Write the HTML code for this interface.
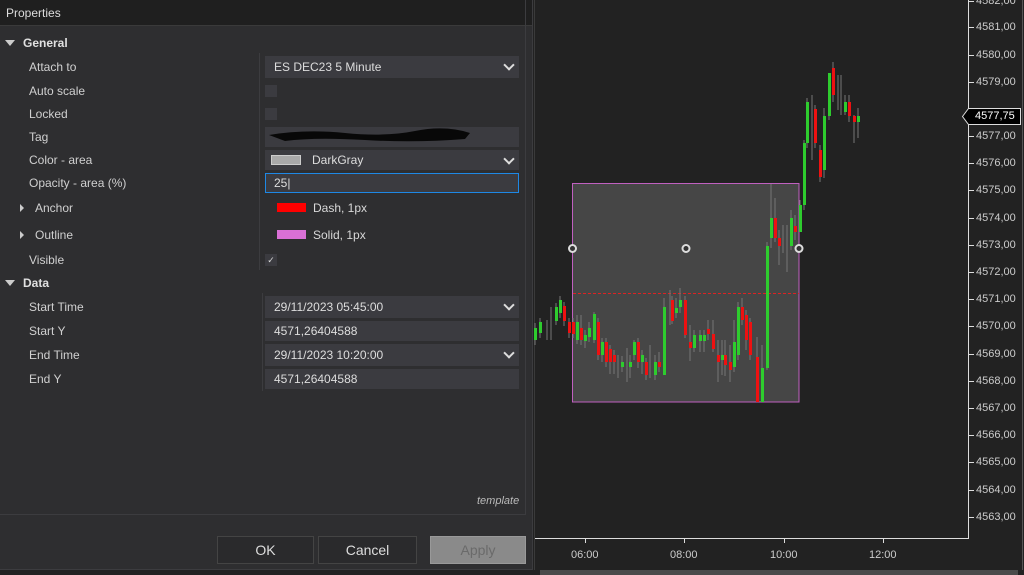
<!DOCTYPE html>
<html><head><meta charset="utf-8"><style>
*{margin:0;padding:0;box-sizing:border-box}
body{width:1024px;height:575px;overflow:hidden;background:#222;font-family:"Liberation Sans",sans-serif;font-size:12px;color:#d8d8d8;position:relative}
.a{position:absolute}
#dlg{left:0;top:0;width:533px;height:570px;background:#2e2e30;border-right:1px solid #3c3c3f}
#title{left:0;top:0;width:532px;height:26px;background:#1f1f1f;border-bottom:1px solid #3a3a3a;padding:6px 6px;color:#ddd}
.lbl{left:29px;color:#d0d0d0}
.hdr{left:23px;font-weight:bold;color:#e0e0e0}
.tri{width:0;height:0;border-left:5px solid transparent;border-right:5px solid transparent;border-top:6px solid #ccc}
.tr{width:0;height:0;border-top:4px solid transparent;border-bottom:4px solid transparent;border-left:4px solid #ccc}
.box{left:265px;width:254px;background:#3b3b40;padding-left:9px;color:#ddd}
.chev{right:6px;top:5px;width:8px;height:8px;border-right:2px solid #ddd;border-bottom:2px solid #ddd;transform:rotate(45deg)}
.cb{left:265px;width:12px;height:12px;background:#3b3b40}
.btn{top:536px;height:28px;border:1px solid #444;background:#2a2a2c;text-align:center;line-height:26px;font-size:14px;color:#ddd}
.pl{left:976px;color:#ccc;font-size:11px}
.tl{top:549px;color:#ccc;font-size:11px}
</style></head><body>
<div id="dlg" class="a">
<div id="title" class="a">Properties</div>
<div class="a tri" style="left:5px;top:40px"></div>
<div class="a hdr" style="top:36px">General</div>
<div class="a" style="left:259px;top:53px;width:1px;height:217px;background:#3c3c3f"></div>
<div class="a lbl" style="top:60px">Attach to</div>
<div class="a box" style="top:56px;height:22px;line-height:22px">ES DEC23 5 Minute<div class="a chev"></div></div>
<div class="a lbl" style="top:84px">Auto scale</div><div class="a cb" style="top:85px"></div>
<div class="a lbl" style="top:107px">Locked</div><div class="a cb" style="top:108px"></div>
<div class="a lbl" style="top:130px">Tag</div>
<div class="a box" style="top:127px;height:20px"><svg class="a" style="left:0;top:0" width="210" height="20"><path d="M4 8 Q40 2 80 6 T150 4 T205 6 L200 12 Q150 16 100 13 T20 14 Z" fill="#080808"/></svg></div>
<div class="a lbl" style="top:153px">Color - area</div>
<div class="a box" style="top:150px;height:20px;line-height:20px;padding-left:47px">DarkGray<div class="a" style="left:6px;top:5px;width:30px;height:10px;background:#a9a9a9;border:1px solid #ccc"></div><div class="a chev"></div></div>
<div class="a lbl" style="top:176px">Opacity - area (%)</div>
<div class="a box" style="top:173px;height:20px;line-height:18px;border:1px solid #1e88e5;padding-left:8px">25|</div>
<div class="a tr" style="left:20px;top:204px"></div>
<div class="a lbl" style="left:35px;top:201px">Anchor</div>
<div class="a" style="left:277px;top:203px;width:29px;height:9px;background:#f00"></div>
<div class="a" style="left:313px;top:201px">Dash, 1px</div>
<div class="a tr" style="left:20px;top:231px"></div>
<div class="a lbl" style="left:35px;top:228px">Outline</div>
<div class="a" style="left:277px;top:230px;width:29px;height:9px;background:#da70d6"></div>
<div class="a" style="left:313px;top:228px">Solid, 1px</div>
<div class="a lbl" style="top:253px">Visible</div><div class="a cb" style="top:254px;font-size:9px;line-height:12px;text-align:center">✓</div>
<div class="a tri" style="left:5px;top:280px"></div>
<div class="a hdr" style="top:276px">Data</div>
<div class="a" style="left:262px;top:293px;width:1px;height:98px;background:#3c3c3f"></div>
<div class="a lbl" style="top:300px">Start Time</div>
<div class="a box" style="top:296px;height:22px;line-height:22px">29/11/2023 05:45:00<div class="a chev"></div></div>
<div class="a lbl" style="top:324px">Start Y</div>
<div class="a box" style="top:321px;height:20px;line-height:20px">4571,26404588</div>
<div class="a lbl" style="top:348px">End Time</div>
<div class="a box" style="top:344px;height:22px;line-height:22px">29/11/2023 10:20:00<div class="a chev"></div></div>
<div class="a lbl" style="top:372px">End Y</div>
<div class="a box" style="top:369px;height:20px;line-height:20px">4571,26404588</div>
<div class="a" style="left:0;top:0;width:526px;height:515px;border-right:1px solid #3c3c3f;border-bottom:1px solid #3c3c3f"></div>
<div class="a" style="left:477px;top:495px;font-style:italic;font-size:11px;color:#bbb">template</div>
<div class="a btn" style="left:217px;width:97px">OK</div>
<div class="a btn" style="left:318px;width:99px">Cancel</div>
<div class="a btn" style="left:430px;width:96px;background:#8a8a8a;color:#6a6a6a;border-color:#999">Apply</div>
<div class="a" style="left:0;top:569px;width:533px;height:1px;background:#3c3c3f"></div>
</div>
<div class="a" style="left:534px;top:0;width:1px;height:570px;background:#3a3a3a"></div>
<div class="a" style="left:540px;top:570px;width:478px;height:5px;background:#4a4a4a"></div>
<svg class="a" style="left:0;top:0" width="1024" height="575">
<line x1="968.5" y1="0" x2="968.5" y2="538" stroke="#ddd"/>
<line x1="535" y1="538.5" x2="969" y2="538.5" stroke="#ddd"/>
<line x1="1022.5" y1="0" x2="1022.5" y2="570" stroke="#555"/>
<g stroke="#ddd">
<line x1="585.5" y1="538" x2="585.5" y2="543"/><line x1="684.5" y1="538" x2="684.5" y2="543"/><line x1="784.5" y1="538" x2="784.5" y2="543"/><line x1="883.5" y1="538" x2="883.5" y2="543"/>
</g>
<rect x="572.5" y="183.5" width="226.5" height="218.5" fill="#464646" stroke="#c060c0"/>
<line x1="573" y1="293.5" x2="799" y2="293.5" stroke="#d22" stroke-dasharray="3,2"/>
<g stroke="#777">
<path d="M535 323V345M540 318V338M547 320V340M551 307V340M556 303V325M560 296V318M564 302V326M569 318V338M573 318V338M577 315V344M581 315V345M585 330V348M589 322V342M594 312V343M598 318V360M602 338V362M606 338V367M610 345V374M614 350V374M618 355V378M622 356V372M627 348V382M630 355V378M634 340V360M638 338V368M642 350V374M646 358V380M650 345V378M655 355V380M659 352V372M664 298V375M670 290V325M672 296V324M676 298V318M680 288V313M685 296V338M690 325V361M694 330V352M700 330V352M704 330V352M708 320V340M713 320V352M718 340V382M722 340V375M725 340V376M730 345V382M734 320V372M738 302V360M742 298V325M746 310V350M750 318V360M757 337V402M762 345V402M767 242V370M771 184V248M775 198V242M779 230V265M783 225V253M787 225V272M791 210V250M795 215V240M800 200V232M804 140V210M807 98V148M812 95V160M815 105V148M820 145V182M824 108V178M829 75V120M833 62V102M838 75V110M841 75V115M845 95V115M849 95V122M854 115V143M858 108V138"/>
</g>
<g fill="#2ecc2e">
<rect x="534" y="328" width="3" height="12"/><rect x="539" y="322" width="3" height="11"/><rect x="555" y="307" width="3" height="14"/><rect x="559" y="300" width="3" height="13"/><rect x="576" y="322" width="3" height="18"/><rect x="584" y="335" width="3" height="6"/><rect x="588" y="328" width="3" height="9"/><rect x="593" y="314" width="3" height="26"/><rect x="601" y="342" width="3" height="13"/><rect x="621" y="362" width="3" height="5"/><rect x="629" y="362" width="3" height="5"/><rect x="633" y="342" width="3" height="13"/><rect x="641" y="355" width="3" height="7"/><rect x="654" y="362" width="3" height="13"/><rect x="663" y="307" width="3" height="68"/><rect x="675" y="308" width="3" height="5"/><rect x="679" y="300" width="3" height="7"/><rect x="693" y="335" width="3" height="13"/><rect x="699" y="335" width="3" height="6"/><rect x="703" y="335" width="3" height="6"/><rect x="721" y="355" width="3" height="5"/><rect x="733" y="342" width="3" height="25"/><rect x="737" y="307" width="3" height="48"/><rect x="761" y="368" width="3" height="34"/><rect x="766" y="246" width="3" height="122"/><rect x="770" y="218" width="3" height="20"/><rect x="790" y="218" width="3" height="28"/><rect x="799" y="205" width="3" height="27"/><rect x="803" y="143" width="3" height="62"/><rect x="806" y="102" width="3" height="41"/><rect x="823" y="116" width="3" height="54"/><rect x="828" y="73" width="3" height="43"/><rect x="844" y="102" width="3" height="10"/><rect x="857" y="116" width="3" height="6"/>
</g>
<g fill="#ee1111">
<rect x="563" y="306" width="3" height="15"/><rect x="568" y="322" width="3" height="11"/><rect x="572" y="322" width="3" height="12"/><rect x="580" y="328" width="3" height="12"/><rect x="597" y="322" width="3" height="33"/><rect x="605" y="342" width="3" height="20"/><rect x="609" y="349" width="3" height="13"/><rect x="613" y="355" width="3" height="7"/><rect x="637" y="342" width="3" height="20"/><rect x="645" y="362" width="3" height="13"/><rect x="658" y="362" width="3" height="5"/><rect x="671" y="300" width="3" height="21"/><rect x="684" y="300" width="3" height="35"/><rect x="689" y="342" width="3" height="6"/><rect x="707" y="329" width="3" height="5"/><rect x="712" y="334" width="3" height="15"/><rect x="717" y="355" width="3" height="7"/><rect x="724" y="355" width="3" height="10"/><rect x="729" y="362" width="3" height="8"/><rect x="741" y="307" width="3" height="13"/><rect x="745" y="315" width="3" height="25"/><rect x="749" y="322" width="3" height="33"/><rect x="756" y="357" width="3" height="45"/><rect x="774" y="218" width="3" height="20"/><rect x="778" y="238" width="3" height="8"/><rect x="794" y="226" width="3" height="6"/><rect x="814" y="109" width="3" height="34"/><rect x="819" y="150" width="3" height="27"/><rect x="832" y="68" width="3" height="27"/><rect x="848" y="102" width="3" height="14"/><rect x="853" y="116" width="3" height="6"/>
</g>
<g fill="#333" stroke="#ddd" stroke-width="2">
<circle cx="572.5" cy="248.5" r="3.5"/><circle cx="686" cy="248.5" r="3.5"/><circle cx="799" cy="248.5" r="3.5"/>
</g>
<g stroke="#ddd">
<path d="M969 1.5h5M969 27.5h5M969 55.5h5M969 82.5h5M969 136.5h5M969 163.5h5M969 190.5h5M969 218.5h5M969 245.5h5M969 272.5h5M969 299.5h5M969 326.5h5M969 354.5h5M969 381.5h5M969 408.5h5M969 435.5h5M969 462.5h5M969 490.5h5M969 517.5h5"/>
</g>
<path d="M962.5 116.5L968.5 108.5H1020.5V124.5H968.5Z" fill="#000" stroke="#ddd"/>
</svg>
<div class="a pl" style="top:-5px">4582,00</div>
<div class="a pl" style="top:21px">4581,00</div>
<div class="a pl" style="top:49px">4580,00</div>
<div class="a pl" style="top:76px">4579,00</div>
<div class="a pl" style="top:130px">4577,00</div>
<div class="a pl" style="top:157px">4576,00</div>
<div class="a pl" style="top:184px">4575,00</div>
<div class="a pl" style="top:212px">4574,00</div>
<div class="a pl" style="top:239px">4573,00</div>
<div class="a pl" style="top:266px">4572,00</div>
<div class="a pl" style="top:293px">4571,00</div>
<div class="a pl" style="top:320px">4570,00</div>
<div class="a pl" style="top:348px">4569,00</div>
<div class="a pl" style="top:375px">4568,00</div>
<div class="a pl" style="top:402px">4567,00</div>
<div class="a pl" style="top:429px">4566,00</div>
<div class="a pl" style="top:456px">4565,00</div>
<div class="a pl" style="top:484px">4564,00</div>
<div class="a pl" style="top:511px">4563,00</div>
<div class="a pl" style="top:110px;left:975px;color:#fff">4577,75</div>
<div class="a tl" style="left:571px">06:00</div>
<div class="a tl" style="left:670px">08:00</div>
<div class="a tl" style="left:770px">10:00</div>
<div class="a tl" style="left:869px">12:00</div>
</body></html>
